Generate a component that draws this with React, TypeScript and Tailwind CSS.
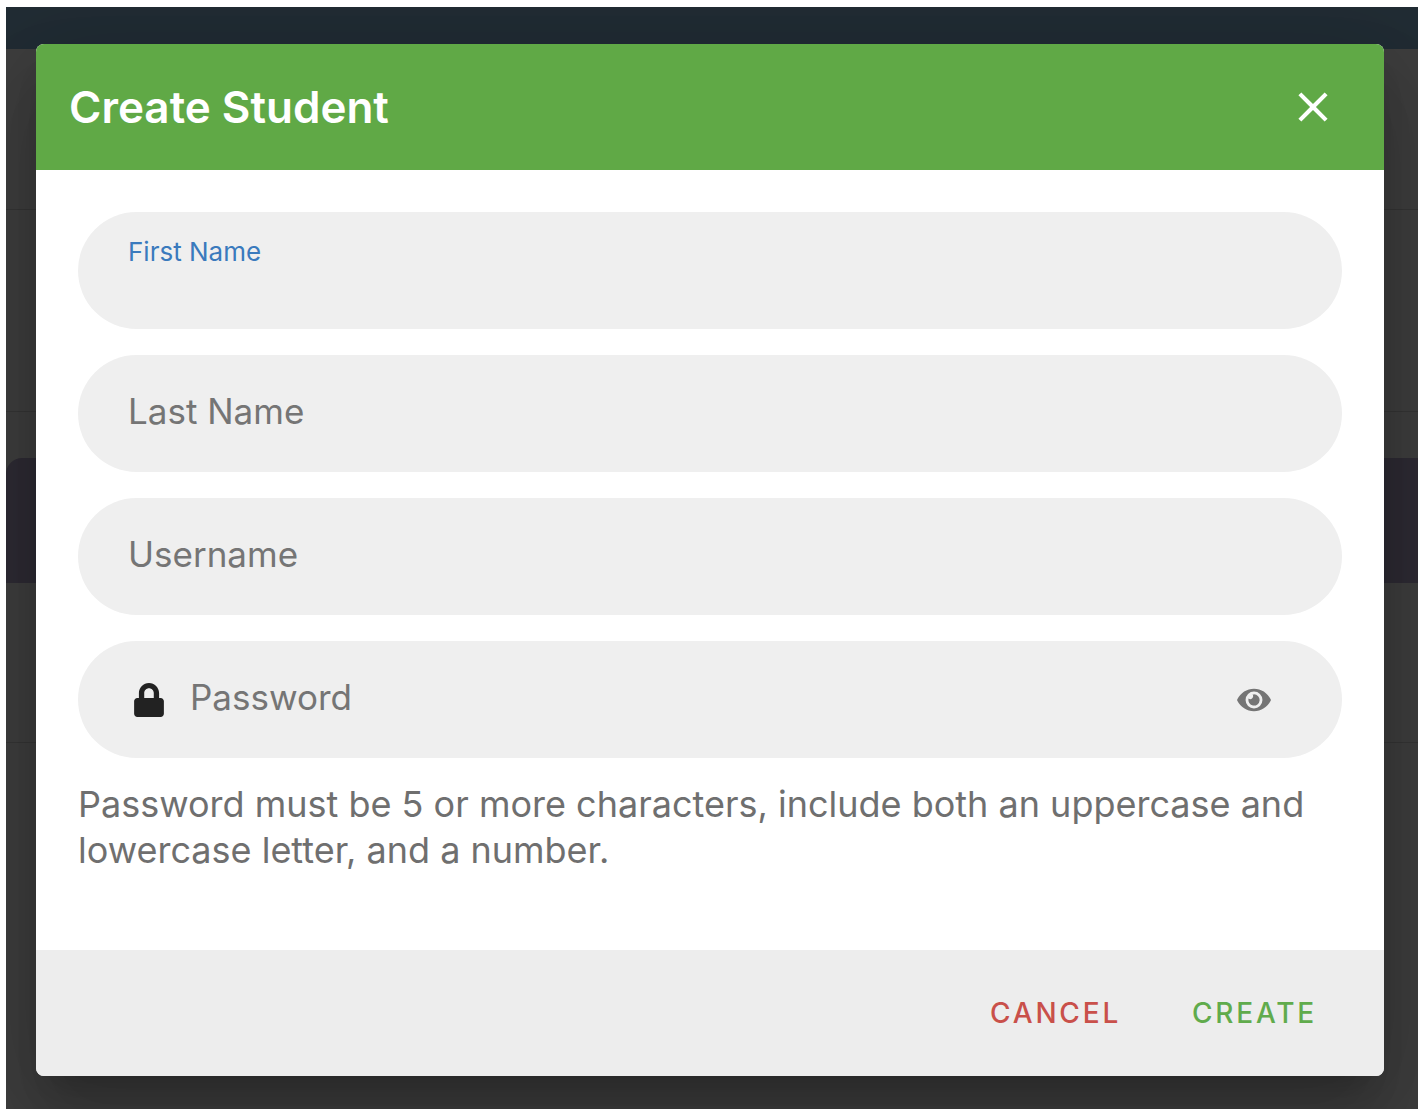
import React, { useState } from 'react';
import { FaEye, FaLock } from 'react-icons/fa';
import { MdClose } from 'react-icons/md';

type FieldName = 'firstName' | 'lastName' | 'username' | 'password';

interface TextFieldProps {
  name: FieldName;
  label: string;
  type?: string;
  value: string;
  active: boolean;
  onChange: (name: FieldName, value: string) => void;
  onFocus: (name: FieldName) => void;
  leading?: React.ReactNode;
  trailing?: React.ReactNode;
}

const TextField: React.FC<TextFieldProps> = ({ name, label, type = 'text', value, active, onChange, onFocus, leading, trailing }) => {
  const floating = active || value !== '';

  return (
    <div className="flex h-[117px] items-center rounded-full bg-[#efefef] pr-[71px] pl-[50px]">
      {leading}
      <div className="relative h-full flex-1">
        <input
          id={name}
          name={name}
          type={type}
          value={value}
          onChange={e => onChange(name, e.target.value)}
          onFocus={() => onFocus(name)}
          className="h-full w-full bg-transparent pt-8 text-[35px] text-[#222222] outline-none"
        />
        <label
          htmlFor={name}
          className={
            floating
              ? 'pointer-events-none absolute top-6 left-0 text-[26px] leading-8 text-[#3a7abd]'
              : 'pointer-events-none absolute inset-y-0 left-0 flex items-center pb-1 text-[35px] text-[#757575]'
          }
        >
          {label}
        </label>
      </div>
      {trailing}
    </div>
  );
};

// Dimmed page behind the dialog
const Backdrop: React.FC = () => (
  <div className="absolute inset-0 flex flex-col bg-[#3e3e3e]" aria-hidden="true">
    <div className="h-[42px] bg-[#212c34]" />
    <div className="h-[161px] border-b border-[#353535]" />
    <div className="h-[202px] border-b border-[#353535]" />
    <div className="h-[46px]" />
    <div className="h-[125px] rounded-tl-2xl bg-[#2e2b34]" />
    <div className="h-[160px] border-b border-[#353535]" />
  </div>
);

export default function App() {
  const [values, setValues] = useState<Record<FieldName, string>>({ firstName: '', lastName: '', username: '', password: '' });
  const [active, setActive] = useState<FieldName>('firstName');
  const [showPassword, setShowPassword] = useState(false);

  const handleChange = (name: FieldName, value: string) => {
    setValues(prev => ({ ...prev, [name]: value }));
  };

  const field = (name: FieldName) => ({
    name,
    value: values[name],
    active: active === name,
    onChange: handleChange,
    onFocus: setActive
  });

  return (
    <div className="bg-white pt-[7px] pr-2 pb-[9px] pl-1.5 font-['Inter',sans-serif]">
      <div className="relative overflow-hidden pt-[37px] pr-[34px] pb-[33px] pl-[30px]">
        <Backdrop />
        <form
          role="dialog"
          aria-labelledby="dialog-title"
          onSubmit={e => e.preventDefault()}
          className="relative rounded-lg bg-white shadow-[0_23px_32px_-15px_rgba(0,0,0,0.2),0_50px_80px_6px_rgba(0,0,0,0.14),0_19px_97px_17px_rgba(0,0,0,0.12)]"
        >
          <header className="flex h-[126px] items-center justify-between rounded-t-lg bg-[#60a946] pr-[46px] pl-[33px]">
            <h2 id="dialog-title" className="text-[44px] font-semibold text-white">Create Student</h2>
            <button type="button" aria-label="Close" className="text-white">
              <MdClose className="size-[50px]" />
            </button>
          </header>

          <div className="px-[42px] pt-[42px] pb-[77px]">
            <div className="flex flex-col gap-[26px]">
              <TextField {...field('firstName')} label="First Name" />
              <TextField {...field('lastName')} label="Last Name" />
              <TextField {...field('username')} label="Username" />
              <TextField
                {...field('password')}
                label="Password"
                type={showPassword ? 'text' : 'password'}
                leading={<FaLock className="mr-[26px] ml-1.5 h-[34px] w-[30px] text-[#222222]" />}
                trailing={
                  <button type="button" aria-label="Show password" onClick={() => setShowPassword(!showPassword)} className="text-[#757575]">
                    <FaEye className="h-[30px] w-[34px]" />
                  </button>
                }
              />
            </div>
            <p className="mt-[23px] text-[36px] leading-[46px] text-[#6f6f6f]">
              Password must be 5 or more characters, include both an uppercase and lowercase letter, and a number.
            </p>
          </div>

          <footer className="flex h-[126px] items-center justify-end gap-[37px] rounded-b-lg bg-[#ededed] pr-[50px]">
            <button type="button" className="px-[17px] text-[28px] font-medium tracking-widest text-[#c9504a]">CANCEL</button>
            <button type="submit" className="px-[17px] text-[28px] font-medium tracking-widest text-[#60ab4c]">CREATE</button>
          </footer>
        </form>
      </div>
    </div>
  );
}
